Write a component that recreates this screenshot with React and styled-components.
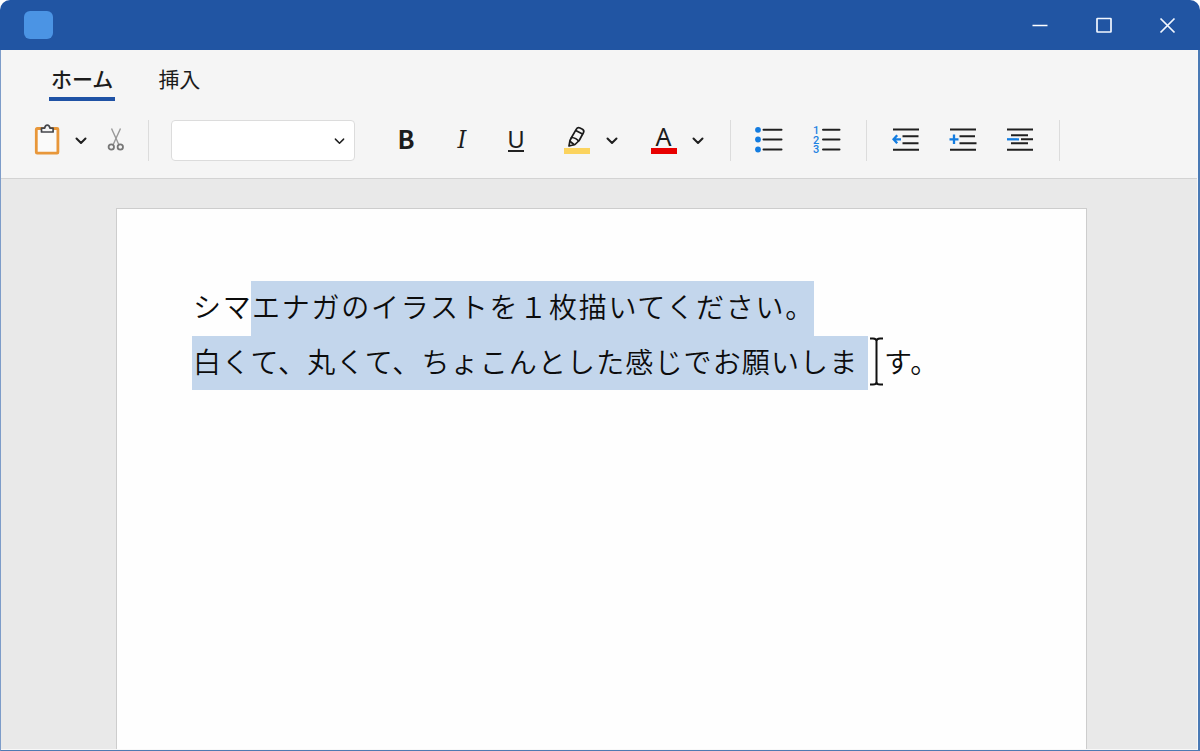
import styled, { createGlobalStyle } from "styled-components";

const GlobalStyle = createGlobalStyle`
  * {
    box-sizing: border-box;
  }

  body {
    margin: 0;
    background: #fff;
    color: #1c1c1c;
    font-family: "Noto Sans CJK JP", "Noto Sans", sans-serif;
  }

  svg {
    display: block;
  }
`;

const Window = styled.div`
  display: flex;
  flex-direction: column;
  width: 1200px;
  height: 751px;
  overflow: hidden;
  border-radius: 10px 10px 0 0;
  background: #2155a3;
`;

const TitleBar = styled.header`
  display: flex;
  align-items: center;
  justify-content: space-between;
  height: 50px;
  flex: none;
  padding: 0 24px;
`;

const AppIcon = styled.div`
  width: 29px;
  height: 28px;
  margin-bottom: 1px;
  border-radius: 6px;
  background: #4b94e4;
`;

const WindowControls = styled.div`
  display: flex;
  gap: 45.5px;
  margin-bottom: 1px;
`;

const Body = styled.div`
  display: flex;
  flex-direction: column;
  flex: 1;
  min-height: 0;
  padding: 0 1px 1px 0;
  border-left: 1px solid #7d9cc9;
  border-right: 2px solid #4a7ab5;
  border-bottom: 1px solid #4f7ab2;
  background: #f8f8f8;
`;

const Tabs = styled.nav`
  display: flex;
  gap: 41px;
  height: 52px;
  flex: none;
  padding: 11px 0 0 48px;
  background: #f5f5f5;
`;

const Tab = styled.div`
  height: 40px;
  padding: 0 2px;
  font-size: 21px;
  line-height: 34px;
  font-weight: ${({ $active }) => ($active ? 500 : 400)};
  border-bottom: 4px solid ${({ $active }) => ($active ? "#1f52a5" : "transparent")};
`;

const Toolbar = styled.div`
  display: flex;
  align-items: flex-start;
  height: 77px;
  flex: none;
  padding: 18px 0 0 33px;
  background: #f5f5f5;
  border-bottom: 1px solid #d3d3d3;
`;

const Tool = styled.div`
  display: flex;
  align-items: center;
  justify-content: center;
  width: ${({ $width }) => $width}px;
  height: 40px;
  margin-right: ${({ $gap = 0 }) => $gap}px;
`;

const Divider = styled.div`
  width: 1px;
  height: 41px;
  margin-right: ${({ $gap = 0 }) => $gap}px;
  background: #dcdcdc;
`;

const FontSelect = styled.div`
  display: flex;
  align-items: center;
  justify-content: flex-end;
  width: 184px;
  height: 41px;
  margin-right: 38px;
  padding-right: 9px;
  border: 1px solid #dcdcdc;
  border-radius: 4px;
  background: #fff;
`;

const Workspace = styled.main`
  flex: 1;
  min-height: 0;
  padding: 29px 0 0 115px;
  background: #e9e9e9;
`;

const Page = styled.article`
  width: 971px;
  height: 100%;
  padding: 72px 0 0 75px;
  border: 1px solid #cdcdcd;
  border-width: 1px 1px 0;
  background: #fefefe;
`;

const Line = styled.div`
  display: flex;
  height: 54.5px;
  font-size: 28px;
  font-weight: 350;
  line-height: 50px;
  letter-spacing: ${({ $spacing }) => $spacing}px;
  color: #0c0c0c;
  white-space: nowrap;
`;

const Text = styled.span`
  width: ${({ $width }) => $width}px;
  padding-left: 1px;
  background: ${({ $selected }) => ($selected ? "#c3d6ec" : "transparent")};
`;

const Caret = styled.span`
  display: flex;
  width: 15px;
  padding-left: 1px;
`;

const Chevron = ({ size = 12, weight = 2 }) => (
  <svg width={size} height={size} viewBox="0 0 12 12" fill="none" stroke="#1f1f1f" strokeWidth={weight} strokeLinecap="round" strokeLinejoin="round">
    <path d="M1.500 4.500l4.500 4.500L10.500 4.500" />
  </svg>
);

const MinimizeIcon = () => (
  <svg width="18" height="18" stroke="#fff" strokeWidth="1.7">
    <path d="M1.500 9.500H16.500" />
  </svg>
);

const MaximizeIcon = () => (
  <svg width="18" height="18" fill="none" stroke="#f2f7ff" strokeWidth="1.7">
    <rect x="2" y="2.500" width="14" height="13.500" rx="0.500" />
  </svg>
);

const CloseIcon = () => (
  <svg width="18" height="18" stroke="#f2f7ff" strokeWidth="1.7">
    <path d="M2.500 2.500l14 14M16.500 2.500l-14 14" />
  </svg>
);

const ClipboardIcon = () => (
  <svg width="26" height="32" viewBox="0 1 26 32" fill="none">
    <rect x="2.300" y="5.500" width="21.600" height="24.600" rx="0.800" fill="#fafafa" stroke="#e8973a" strokeWidth="2.800" />
    <path d="M7.500 9V5.200h3.200c.3-1.900 1-3 2.600-3s2.300 1.100 2.600 3h3.200V9z" fill="#f5f5f5" stroke="#45474c" strokeWidth="1.700" strokeLinejoin="round" />
  </svg>
);

const ScissorsIcon = () => (
  <svg width="18" height="26" viewBox="0 0 18 26" fill="none" stroke="#777" strokeWidth="1.400">
    <path d="M4.500 1.500L12 18" stroke="#999" />
    <path d="M13.500 1.500L6 18" stroke="#999" />
    <circle cx="4.300" cy="20" r="2.700" strokeWidth="1.800" />
    <circle cx="13.300" cy="20" r="2.700" strokeWidth="1.800" />
  </svg>
);

const BoldLetter = styled.span`
  margin-bottom: 4px;
  font-size: 25px;
  font-weight: 700;
  line-height: 36px;
`;

const ItalicLetter = styled.span`
  font-family: "DejaVu Serif Condensed", "DejaVu Serif", serif;
  font-size: 25px;
  font-stretch: condensed;
  font-style: italic;
  line-height: 40px;
`;

const UnderlineMark = styled.div`
  display: flex;
  flex-direction: column;
  align-items: center;
  width: 16px;
  height: 24px;
  margin-bottom: 1px;
  border-bottom: 2px solid #222;
  font-family: "Noto Sans", sans-serif;
  font-size: 24px;
  line-height: 21px;
`;

const ColorMark = styled.div`
  display: flex;
  flex-direction: column;
  align-items: center;
  justify-content: flex-end;
  width: 26px;
  height: 28px;
  border-bottom: 6px solid ${({ $color }) => $color};
  font-family: "Noto Sans", sans-serif;
  font-size: 25px;
  line-height: 24px;
`;

const PenIcon = () => (
  <svg width="20" height="22" viewBox="0 0 20 22" fill="none" stroke="#1a1a1a" strokeWidth="1.700" strokeLinejoin="round" strokeLinecap="round">
    <path d="M4.500 11.500L9.200 3.300Q10.500 1.100 13 2L15.500 3.200Q17.500 4.500 16.500 6.500L12.200 14.500L8 18.500L2 20L3 14.500Z" />
    <path d="M9.200 4.700l6.300 3.200M4.500 11.500Q9.500 12 11.500 15M3.200 15.500L7 18.500" />
  </svg>
);

const BulletsIcon = () => (
  <svg width="30" height="28" viewBox="0 0 30 28">
    <path d="M9.500 3.800h18M9.500 13.500h18M9.500 23.500h18" stroke="#202020" strokeWidth="2" strokeLinecap="round" />
    <g fill="#137ce0">
      <circle cx="4" cy="3.800" r="2.900" />
      <circle cx="4" cy="13.500" r="2.900" />
      <circle cx="4" cy="23.500" r="2.900" />
    </g>
  </svg>
);

const NumberedList = styled.div`
  display: flex;
  gap: 3px;
  width: 28px;
`;

const Digits = styled.div`
  width: 6px;
  padding-top: 0.5px;
  color: #1f83e2;
  font-family: Roboto, sans-serif;
  font-size: 11px;
  font-weight: 500;
  line-height: 9.5px;
`;

const NumberedIcon = () => (
  <NumberedList>
    <Digits>
      <div>1</div>
      <div>2</div>
      <div>3</div>
    </Digits>
    <svg width="19" height="28" stroke="#202020" strokeWidth="2" strokeLinecap="round">
      <path d="M1 3.800h16.500M1 13.500h16.500M1 23.500h16.500" />
    </svg>
  </NumberedList>
);

const indentShapes = {
  outdent: {
    lines: "M1 3.500h26M10.500 10.200h16M10.500 17.300h16M1 23.800h26",
    mark: "M9 13.300H2M5.200 9.300L1.500 13.300l3.700 4",
  },
  indent: {
    lines: "M1 3.500h26M10.500 10.200h15.500M10.500 17.300h17M1 23.800h26",
    mark: "M0.500 13.300h9M5 8.500v9.500",
  },
  center: {
    lines: "M1 3.500h26M5 9.300h17M15 13.300h12M5 17.300h17M1 23.800h26",
    mark: "M1 13.300h12",
  },
};

const IndentIcon = ({ kind }) => (
  <svg width="28" height="28" fill="none" strokeWidth="2">
    <path d={indentShapes[kind].lines} stroke="#202020" />
    <path d={indentShapes[kind].mark} stroke="#137ce0" strokeWidth="2.300" />
  </svg>
);

const CursorIcon = () => (
  <svg width="15" height="52" fill="none" stroke="#111" strokeWidth="2">
    <path d="M1 2.500h3q3.500 0 3.500 2.500Q7.500 2.500 11 2.500h3M7.500 4.500v42.500M1 48.500h3q3.500 0 3.500-2.500Q7.500 48.500 11 48.500h3" />
  </svg>
);

const App = () => (
  <>
    <GlobalStyle />
    <Window>
      <TitleBar>
        <AppIcon />
        <WindowControls>
          <MinimizeIcon />
          <MaximizeIcon />
          <CloseIcon />
        </WindowControls>
      </TitleBar>
      <Body>
        <Tabs>
          <Tab $active>ホーム</Tab>
          <Tab>挿入</Tab>
        </Tabs>
        <Toolbar>
          <Tool $width={26} $gap={15}><ClipboardIcon /></Tool>
          <Tool $width={12} $gap={20}><Chevron /></Tool>
          <Tool $width={18} $gap={23}><ScissorsIcon /></Tool>
          <Divider $gap={22} />
          <FontSelect><Chevron size={11} weight={1.6} /></FontSelect>
          <Tool $width={26} $gap={30}><BoldLetter>B</BoldLetter></Tool>
          <Tool $width={26} $gap={28}><ItalicLetter>I</ItalicLetter></Tool>
          <Tool $width={26} $gap={35}><UnderlineMark>U</UnderlineMark></Tool>
          <Tool $width={26} $gap={16}><ColorMark $color="#fbd35e"><PenIcon /></ColorMark></Tool>
          <Tool $width={12} $gap={32.5}><Chevron /></Tool>
          <Tool $width={26} $gap={15.5}><ColorMark $color="#e80000">A</ColorMark></Tool>
          <Tool $width={12} $gap={26}><Chevron /></Tool>
          <Divider $gap={23} />
          <Tool $width={30} $gap={29}><BulletsIcon /></Tool>
          <Tool $width={28} $gap={25}><NumberedIcon /></Tool>
          <Divider $gap={24.5} />
          <Tool $width={28} $gap={29.5}><IndentIcon kind="outdent" /></Tool>
          <Tool $width={28} $gap={29}><IndentIcon kind="indent" /></Tool>
          <Tool $width={28} $gap={25}><IndentIcon kind="center" /></Tool>
          <Divider />
        </Toolbar>
        <Workspace>
          <Page>
            <Line $spacing={1.75}>
              <Text $width={59}>シマ</Text>
              <Text $width={563} $selected>エナガのイラストを１枚描いてください。</Text>
            </Line>
            <Line $spacing={1.12}>
              <Text $width={676} $selected>白くて、丸くて、ちょこんとした感じでお願いしま</Text>
              <Caret><CursorIcon /></Caret>
              <Text>す。</Text>
            </Line>
          </Page>
        </Workspace>
      </Body>
    </Window>
  </>
);

export default App;
